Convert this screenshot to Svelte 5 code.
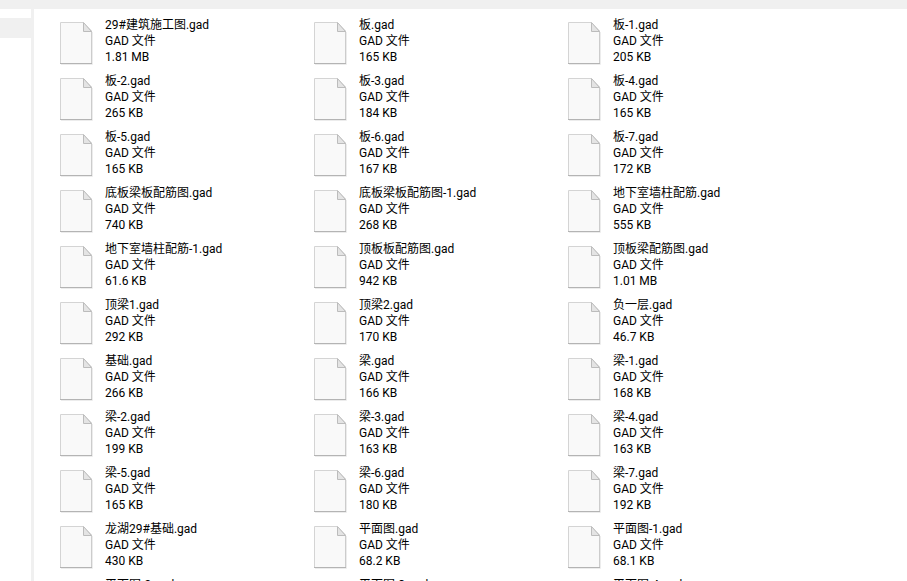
<script lang="ts">
	const names = [
		['29#建筑施工图.gad', '1.81 MB'], ['板.gad', '165 KB'], ['板-1.gad', '205 KB'],
		['板-2.gad', '265 KB'], ['板-3.gad', '184 KB'], ['板-4.gad', '165 KB'],
		['板-5.gad', '165 KB'], ['板-6.gad', '167 KB'], ['板-7.gad', '172 KB'],
		['底板梁板配筋图.gad', '740 KB'], ['底板梁板配筋图-1.gad', '268 KB'], ['地下室墙柱配筋.gad', '555 KB'],
		['地下室墙柱配筋-1.gad', '61.6 KB'], ['顶板板配筋图.gad', '942 KB'], ['顶板梁配筋图.gad', '1.01 MB'],
		['顶梁1.gad', '292 KB'], ['顶梁2.gad', '170 KB'], ['负一层.gad', '46.7 KB'],
		['基础.gad', '266 KB'], ['梁.gad', '166 KB'], ['梁-1.gad', '168 KB'],
		['梁-2.gad', '199 KB'], ['梁-3.gad', '163 KB'], ['梁-4.gad', '163 KB'],
		['梁-5.gad', '165 KB'], ['梁-6.gad', '180 KB'], ['梁-7.gad', '192 KB'],
		['龙湖29#基础.gad', '430 KB'], ['平面图.gad', '68.2 KB'], ['平面图-1.gad', '68.1 KB'],
		['平面图-2.gad', '70.4 KB'], ['平面图-3.gad', '69.5 KB'], ['平面图-4.gad', '71.2 KB']
	];
</script>

<div class="window">
	<div class="topbar"></div>
	<div class="body">
		<nav class="nav">
			<div class="nav-selected"></div>
		</nav>
		<div class="divider"></div>
		<main class="files">
			{#each names as [name, size]}
				<div class="file">
					<svg class="icon" width="33" height="43" viewBox="0 0 33 43">
						<path d="M.5 41.500V.5H23L31.500 9V41.500Z" fill="#f9f9f9"/>
						<path d="M.5 41.500V.5H23" fill="none" stroke="#d4d4d4"/>
						<path d="M23 .5L31.500 9V41.500" fill="none" stroke="#cccccc"/>
						<path d="M23.500 .5V9.500H31.500Z" fill="#e4e4e4" stroke="#bcbcbc"/>
						<path d="M0 41.500H32" fill="none" stroke="#b4b4b4"/>
						<path d="M1 42.500H32.500V10" fill="none" stroke="#ececec"/>
					</svg>
					<div class="meta">
						<span>{name}</span>
						<span>GAD 文件</span>
						<span>{size}</span>
					</div>
				</div>
			{/each}
		</main>
	</div>
</div>

<style>
	:global(body) {
		margin: 0;
		background: #fff;
		overflow: hidden;
	}

	.window {
		width: 907px;
		height: 581px;
		overflow: hidden;
		font-family: Roboto, "Noto Sans CJK SC", sans-serif;
		font-size: 12px;
		color: #000;
	}

	.topbar {
		height: 9px;
		background: #f0f0f0;
	}

	.body {
		display: flex;
	}

	.nav {
		width: 31px;
		flex-shrink: 0;
		padding-top: 9px;
	}

	.nav-selected {
		height: 20px;
		background: #f0f0f0;
	}

	.divider {
		width: 3px;
		height: 572px;
		background: #f0f0f0;
		flex-shrink: 0;
	}

	.files {
		display: grid;
		grid-template-columns: repeat(3, 254px);
		grid-auto-rows: 56px;
		padding: 8px 0 0 26px;
	}

	.file {
		display: flex;
		gap: 12px;
	}

	.icon {
		margin-top: 5px;
		flex-shrink: 0;
	}

	.meta {
		display: flex;
		flex-direction: column;
		line-height: 16px;
		white-space: nowrap;
	}
</style>
